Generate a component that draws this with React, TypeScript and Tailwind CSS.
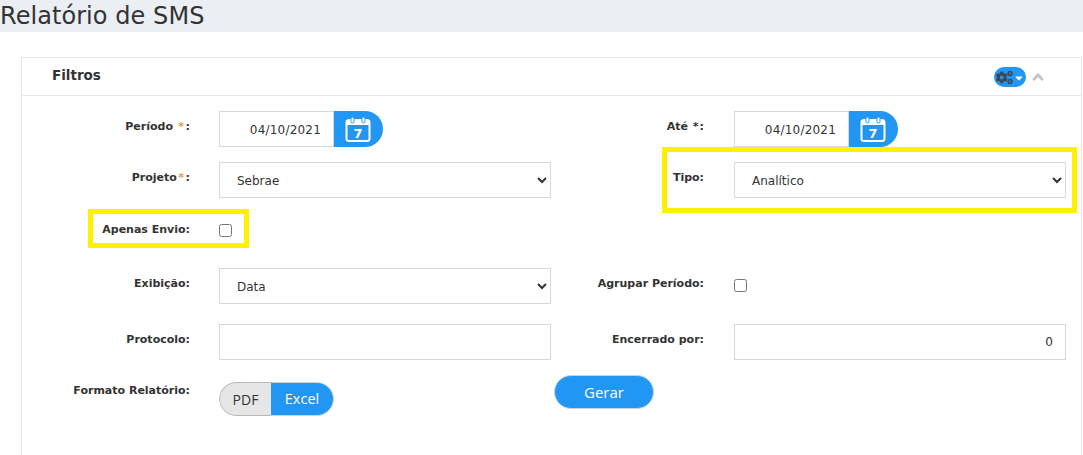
import React from 'react';
import { FaCogs, FaCaretDown, FaAngleUp } from 'react-icons/fa';

const inputBox = "w-[332px] h-[36px] border border-[#d5d8e1] bg-white text-[12px] text-[#333]";

const Label = ({ children, className = "w-[168px]" }: { children: React.ReactNode; className?: string }) => (
  <label className={`${className} shrink-0 text-right text-[11px] font-bold text-[#333] pt-[1px]`}>
    {children}
  </label>
);

const CalendarIcon = () => (
  <svg width="26" height="26" viewBox="0 0 26 26" fill="none">
    <rect x="1.5" y="4" width="23" height="21" rx="2.5" stroke="white" strokeWidth="2" />
    <rect x="1.5" y="4" width="23" height="5" fill="white" />
    <rect x="6" y="1" width="3" height="6" rx="1.5" fill="white" stroke="#2196f3" strokeWidth="1" />
    <rect x="17" y="1" width="3" height="6" rx="1.5" fill="white" stroke="#2196f3" strokeWidth="1" />
    <text x="13" y="22" textAnchor="middle" fill="white" fontSize="13" fontWeight="700" fontFamily="DejaVu Sans">7</text>
  </svg>
);

const DateField = () => (
  <div className="flex h-[36px]">
    <input
      readOnly
      value="04/10/2021"
      className="w-[115px] h-[36px] border border-[#d5d8e1] bg-white text-[12px] tracking-[0.2px] text-[#333] text-right pr-[12px] pt-[1px] outline-none"
    />
    <button className="w-[49px] h-[36px] bg-[#2196f3] rounded-r-[18px] flex items-center justify-start pl-[11px]">
      <CalendarIcon />
    </button>
  </div>
);

const SelectField = ({ value }: { value: string }) => (
  <select defaultValue={value} className={`${inputBox} pl-[13px] pr-[2px] pt-[2px] outline-none`}>
    <option>{value}</option>
  </select>
);

export default function App() {
  return (
    <div className="relative h-[455px] w-[1083px] overflow-hidden bg-white font-['DejaVu_Sans',sans-serif]">
      <div className="h-[32px] bg-[#ebeef3]">
        <h1 className="text-[24px] tracking-[0.06px] leading-[32px] text-[#333]">Relatório de SMS</h1>
      </div>

      {/* Filtros */}
      <div className="ml-[21px] mt-[25px] w-[1061px] h-[420px] border border-[#e4e6eb]">
        <div className="h-[38px] border-b border-[#e4e6eb] flex items-center justify-between pl-[30px] pr-[34px]">
          <span className="text-[13.5px] font-bold text-[#333] -mt-[2px]">Filtros</span>
          <div className="flex items-center gap-[3px] mt-[1px]">
            <div className="w-[32px] h-[20px] rounded-full bg-[#2196f3] flex items-center pl-[2px] relative">
              <FaCogs size={17} className="text-[#3f4650]" />
              <FaCaretDown size={12} className="text-white absolute right-[1px] top-[5px]" />
            </div>
            <FaAngleUp size={18} className="text-[#c4c4c4]" />
          </div>
        </div>

        <div className="pt-[15px] flex flex-col">
          <div className="flex items-start">
            <Label><span className="leading-[30px]">Período <span className="text-[#e59a4f] mx-[1.5px]">*</span>:</span></Label>
            <div className="ml-[29px] w-[332px]"><DateField /></div>
            <Label className="w-[153px]"><span className="leading-[30px]">Até <span className="mx-[1px]">*</span>:</span></Label>
            <div className="ml-[30px]"><DateField /></div>
          </div>

          <div className="flex items-start mt-[15px]">
            <Label><span className="leading-[30px]">Projeto<span className="text-[#e59a4f] mx-[1.5px]">*</span>:</span></Label>
            <div className="ml-[29px]"><SelectField value="Sebrae" /></div>
            <Label className="w-[153px]"><span className="leading-[30px]">Tipo:</span></Label>
            <div className="ml-[30px]"><SelectField value="Analítico" /></div>
          </div>

          <div className="flex items-center mt-[20px] h-[24px]">
            <Label className="w-[168px] !pt-0">Apenas Envio:</Label>
            <input type="checkbox" className="ml-[29px] w-[13px] h-[13px]" />
          </div>

          <div className="flex items-start mt-[26px]">
            <Label><span className="leading-[30px]">Exibição:</span></Label>
            <div className="ml-[29px]"><SelectField value="Data" /></div>
            <Label className="w-[153px]"><span className="leading-[30px]">Agrupar Período:</span></Label>
            <input type="checkbox" className="ml-[30px] mt-[11px] w-[13px] h-[13px]" />
          </div>

          <div className="flex items-start mt-[20px]">
            <Label><span className="leading-[30px]">Protocolo:</span></Label>
            <input className={`ml-[29px] ${inputBox} outline-none`} />
            <Label className="w-[153px]"><span className="leading-[30px]">Encerrado por:</span></Label>
            <input readOnly value="0" className={`ml-[30px] ${inputBox} text-right pr-[12px] outline-none`} />
          </div>

          <div className="flex items-start mt-[15px]">
            <Label><span className="leading-[30px]">Formato Relatório:</span></Label>
            <div className="ml-[29px] w-[332px] mt-[7px]">
              <div className="flex w-[115px] h-[34px] rounded-full overflow-hidden text-[14px] font-['Open_Sans',sans-serif]">
                <span className="w-[52px] bg-[#e6e6e6] border border-[#b8b8b8] border-r-0 rounded-l-full flex items-center justify-center text-[#333]">PDF</span>
                <span className="flex-1 bg-[#2196f3] border border-l-0 border-[#c9d6e2] rounded-r-full flex items-center justify-center text-white text-[14.5px]">Excel</span>
              </div>
            </div>
            <button className="ml-[3px] w-[100px] h-[34px] rounded-full bg-[#2196f3] border border-[#c9d6e2] text-white text-[15px] font-['Open_Sans',sans-serif]">Gerar</button>
          </div>
        </div>
      </div>

      {/* marcações amarelas */}
      <div className="absolute left-[662px] top-[147px] w-[415px] h-[66px] border-[5px] border-[#fff200]" />
      <div className="absolute left-[88px] top-[209px] w-[161px] h-[39px] border-[5px] border-[#fff200]" />
    </div>
  );
}
